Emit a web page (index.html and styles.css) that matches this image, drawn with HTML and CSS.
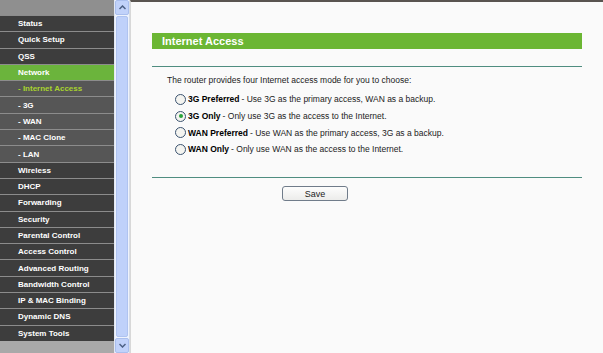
FILE: index.html
```html
<!DOCTYPE html>
<html lang="en">
<head>
  <title>Internet Access</title>
  <meta name="viewport" content="width=device-width, initial-scale=1">
  <link rel="stylesheet" href="styles.css">
</head>
<body>
  <div class="frame">
    <div class="menu">
      <div class="menu-top"></div>
      <ul class="menu-list">
        <li class="item">Status</li>
        <li class="item">Quick Setup</li>
        <li class="item">QSS</li>
        <li class="item active">Network</li>
        <li class="item sub current">- Internet Access</li>
        <li class="item sub">- 3G</li>
        <li class="item sub">- WAN</li>
        <li class="item sub">- MAC Clone</li>
        <li class="item sub">- LAN</li>
        <li class="item">Wireless</li>
        <li class="item">DHCP</li>
        <li class="item">Forwarding</li>
        <li class="item">Security</li>
        <li class="item">Parental Control</li>
        <li class="item">Access Control</li>
        <li class="item">Advanced Routing</li>
        <li class="item">Bandwidth Control</li>
        <li class="item">IP &amp; MAC Binding</li>
        <li class="item">Dynamic DNS</li>
        <li class="item">System Tools</li>
      </ul>
      <div class="menu-bottom"></div>
    </div>

    <div class="scrollbar">
      <div class="scroll-btn">
        <svg width="7" height="5" viewBox="0 0 7 5"><path d="M0.5 4 L3.5 1 L6.5 4" fill="none" stroke="#4d6185" stroke-width="1.5"/></svg>
      </div>
      <div class="scroll-track"><div class="scroll-thumb"></div></div>
      <div class="scroll-btn">
        <svg width="7" height="5" viewBox="0 0 7 5"><path d="M0.5 1 L3.5 4 L6.5 1" fill="none" stroke="#4d6185" stroke-width="1.5"/></svg>
      </div>
    </div>

    <div class="main">
      <h1 class="title">Internet Access</h1>
      <hr class="rule">
      <p class="intro">The router provides four Internet access mode for you to choose:</p>
      <ul class="modes">
        <li><span class="radio"></span><b>3G Preferred</b> - Use 3G as the primary access, WAN as a backup.</li>
        <li><span class="radio checked"></span><b>3G Only</b> - Only use 3G as the access to the Internet.</li>
        <li><span class="radio"></span><b>WAN Preferred</b> - Use WAN as the primary access, 3G as a backup.</li>
        <li><span class="radio"></span><b>WAN Only</b> - Only use WAN as the access to the Internet.</li>
      </ul>
      <hr class="rule bottom">
      <div class="actions">
        <button class="save">Save</button>
      </div>
    </div>
  </div>
</body>
</html>
```

FILE: styles.css
```css
body {
  margin: 0;
  font-family: "Liberation Sans", Arial, sans-serif;
  background-color: #fafafa;
}

.frame {
  display: flex;
  height: 353px;
}

.menu {
  width: 114px;
  display: flex;
  flex-direction: column;
  background-color: #a6a6a6;
}

.menu-top {
  height: 15px;
  background-color: #8f8f8f;
}

.menu-list {
  list-style: none;
  margin: 0;
  padding: 0;
  height: 326px;
  display: flex;
  flex-direction: column;
}

.item {
  flex: 1;
  display: flex;
  align-items: center;
  padding-left: 18px;
  border-top: 1px solid #8c8c8c;
  background-color: #3d3d3d;
  color: #fff;
  font-size: 8px;
  font-weight: bold;
}

.item.sub {
  background-color: #565656;
}

.item.active {
  background-color: #6bb43c;
}

.item.current {
  color: #a8d32e;
}

.menu-bottom {
  flex: 1;
  background-color: #a9a9a9;
}

.scrollbar {
  width: 14px;
  display: flex;
  flex-direction: column;
  background-color: #eef3fd;
  border-left: 1px solid #e2e8f4;
  border-right: 1px solid #d6dce6;
}

.scroll-btn {
  height: 13px;
  display: flex;
  align-items: center;
  justify-content: center;
  background-color: #c1d2fa;
  border: 1px solid #aabfee;
  border-radius: 2px;
}

.scroll-track {
  flex: 1;
  padding: 1px 1px;
  display: flex;
}

.scroll-thumb {
  flex: 1;
  background-color: #bfd1fa;
  border: 1px solid #afc3f0;
  border-radius: 2px;
}

.main {
  flex: 1;
  border-top: 2px solid #595450;
  border-left: 1px solid #d8d8d8;
  padding: 0 21px 0 21px;
  background-color: #fafafa;
}

.title {
  margin: 31px 0 0;
  height: 16px;
  line-height: 16px;
  padding-left: 10px;
  background-color: #6bb633;
  color: #fff;
  font-size: 11px;
  font-weight: bold;
}

.rule {
  margin: 17px 0 0;
  border: 0;
  height: 1px;
  background-color: #4f8d80;
}

.intro {
  margin: 8px 0 0 15px;
  font-size: 8.5px;
  line-height: 11px;
  color: #222;
}

.modes {
  list-style: none;
  margin: 5px 0 0 23px;
  padding: 0;
}

.modes li {
  height: 16.7px;
  display: flex;
  align-items: center;
  font-size: 8.5px;
  color: #222;
}

.modes b {
  color: #000;
  margin-right: 2px;
}

.radio {
  width: 9px;
  height: 9px;
  margin-right: 2px;
  border: 1px solid #3b5370;
  border-radius: 50%;
  background-color: #f4f4f0;
  display: flex;
  align-items: center;
  justify-content: center;
}

.radio.checked::after {
  content: "";
  width: 4px;
  height: 4px;
  border-radius: 50%;
  background-color: #27a33a;
}

.rule.bottom {
  margin-top: 19px;
}

.actions {
  margin-top: 5px;
  padding-left: 130px;
}

.save {
  width: 66px;
  height: 15px;
  padding: 0;
  font-family: "Liberation Sans", Arial, sans-serif;
  font-size: 9px;
  color: #222;
  background: linear-gradient(#fdfdfd, #ececea);
  border: 1px solid #707c8a;
  border-radius: 3px;
}
```
